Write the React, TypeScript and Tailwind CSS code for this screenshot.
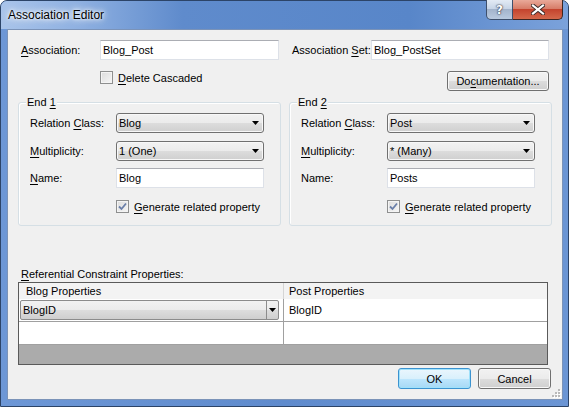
import React from 'react';

const Key: React.FC<{ children: React.ReactNode }> = ({ children }) => (
  <span className="underline underline-offset-[2px] decoration-[1px]">{children}</span>
);

const Arrow: React.FC = () => (
  <svg width="7" height="4" viewBox="0 0 7 4" className="shrink-0">
    <path d="M0 0 H7 L3.5 4 Z" fill="#000" />
  </svg>
);

const TextBox: React.FC<{ value: string; className: string }> = ({ value, className }) => (
  <div
    className={`h-[20px] flex items-center pl-[2px] bg-white border border-[#dde1e8] border-t-[#abadb3] ${className}`}
  >
    {value}
  </div>
);

const Combo: React.FC<{ value: string }> = ({ value }) => (
  <div className="h-[20px] w-[148px] flex items-center pl-[2px] pr-[4px] rounded-[3px] border border-[#707070] bg-[linear-gradient(#f2f2f2,#ebebeb_50%,#dddddd_50%,#cfcfcf)] shadow-[inset_0_0_0_1px_#f8f8f8]">
    <span>{value}</span>
    <span className="ml-auto">
      <Arrow />
    </span>
  </div>
);

const CheckBox: React.FC<{ checked?: boolean; label: React.ReactNode }> = ({ checked, label }) => (
  <div className="flex items-center gap-[5px] h-[13px]">
    <div className="w-[13px] h-[13px] shrink-0 border border-[#8e8f8f] bg-[linear-gradient(135deg,#dcdcdc,#f6f6f6)] shadow-[inset_0_0_0_1px_#f4f4f4] flex items-center justify-center">
      {checked && (
        <svg width="9" height="9" viewBox="0 0 9 9">
          <path d="M1 4.5 L3.5 7 L8 1.5" fill="none" stroke="#6a7fa9" strokeWidth="1.8" />
        </svg>
      )}
    </div>
    <span>{label}</span>
  </div>
);

const Button: React.FC<{ children: React.ReactNode; className: string; primary?: boolean }> = ({
  children,
  className,
  primary,
}) => (
  <div
    className={`h-[20px] flex items-center justify-center rounded-[3px] border ${
      primary
        ? 'border-[#3c93d0] bg-[linear-gradient(#eaf6fd,#d9f0fc_50%,#bee6fd_50%,#a7d9f5)] shadow-[inset_0_0_0_1px_#9fe1fb]'
        : 'border-[#707070] bg-[linear-gradient(#f2f2f2,#ebebeb_50%,#dddddd_50%,#cfcfcf)] shadow-[inset_0_0_0_1px_#f8f8f8]'
    } ${className}`}
  >
    {children}
  </div>
);

const EndGroup: React.FC<{
  n: string;
  relation: string;
  multiplicity: string;
  name: string;
  nameKey?: boolean;
}> = ({ n, relation, multiplicity, name, nameKey }) => (
  <div className="relative w-[263px] h-[124px] rounded-[3px] border border-[#d5dfe5] shadow-[inset_1px_1px_0_#ffffff]">
    <span className="absolute left-[7px] top-[-8px] px-[1px] bg-[#f0f0f0]">
      End <Key>{n}</Key>
    </span>
    <div className="mt-[10px] pl-[11px] flex items-center h-[20px]">
      <span className="w-[86px]">
        Relation <Key>C</Key>lass:
      </span>
      <Combo value={relation} />
    </div>
    <div className="mt-[8px] pl-[11px] flex items-center h-[20px]">
      <span className="w-[86px]">
        <Key>M</Key>ultiplicity:
      </span>
      <Combo value={multiplicity} />
    </div>
    <div className="mt-[7px] pl-[11px] flex items-center h-[20px]">
      <span className="w-[86px]">{nameKey ? <><Key>N</Key>ame:</> : 'Name:'}</span>
      <TextBox value={name} className="w-[148px]" />
    </div>
    <div className="mt-[12px] pl-[97px]">
      <CheckBox
        checked
        label={
          <>
            <Key>G</Key>enerate related property
          </>
        }
      />
    </div>
  </div>
);

const App: React.FC = () => {
  return (
    <div className="relative w-[569px] h-[407px] flex flex-col rounded-t-[7px] border border-[#2c4468] bg-[linear-gradient(90deg,#6d97d6,#5f8bcd_50%,#6b95d4)] font-['Liberation_Sans',Arial,sans-serif] text-[11px] leading-[14px] text-black">
      {/* title bar */}
      <div className="h-[28px] flex items-start rounded-t-[6px] bg-[linear-gradient(90deg,#a9c4ea_0%,#8eb0e1_14%,#5f8bcc_32%,#5886c9_72%,#7ba2db_100%)]">
        <span className="ml-[7px] mt-[7px] text-[12px] [text-shadow:0_0_10px_#ffffff,0_0_6px_#ffffff,0_0_3px_#ffffff]">
          Association Editor
        </span>
      </div>

      {/* caption buttons */}
      <div className="absolute right-[5px] top-[-1px] flex">
        <div className="w-[27px] h-[20px] flex items-center justify-center rounded-bl-[5px] border border-t-0 border-[#3d4f6c] bg-[linear-gradient(#e3ebf5,#c8d5e7_45%,#a3b4cc_50%,#b9cae0)]">
          <span className="font-['DejaVu_Sans',sans-serif] font-bold text-[12px] text-white [text-shadow:0_0_1px_#223,0_0_2px_#223]">?</span>
        </div>
        <div className="w-[50px] h-[20px] flex items-center justify-center rounded-br-[5px] border border-t-0 border-l-0 border-[#3d2520] bg-[linear-gradient(#e9a999,#d77d69_45%,#c4442e_50%,#d4684b)]">
          <svg width="14" height="11" viewBox="0 0 14 11">
            <path d="M2 1.5 L12 9.5 M12 1.5 L2 9.5" stroke="#3b2a28" strokeWidth="4" strokeLinecap="square" />
            <path d="M2 1.5 L12 9.5 M12 1.5 L2 9.5" stroke="#ffffff" strokeWidth="2.2" strokeLinecap="square" />
          </svg>
        </div>
      </div>

      {/* client area */}
      <div className="relative ml-[6px] mr-[5px] mb-[6px] flex-1 flex flex-col border border-[#7b93b8] bg-[#f0f0f0]">
        <div className="mt-[10px] pl-[13px] flex items-center h-[20px]">
          <span className="w-[79px]">
            <Key>A</Key>ssociation:
          </span>
          <TextBox value="Blog_Post" className="w-[179px]" />
          <span className="ml-[13px] w-[79px]">
            Association <Key>S</Key>et:
          </span>
          <TextBox value="Blog_PostSet" className="w-[178px]" />
        </div>

        <div className="mt-[11px] pl-[92px] pr-[13px] flex items-start h-[20px]">
          <CheckBox
            label={
              <>
                <Key>D</Key>elete Cascaded
              </>
            }
          />
          <Button className="ml-auto w-[102px]">
            Do<Key>c</Key>umentation...
          </Button>
        </div>

        <div className="mt-[11px] pl-[10px] flex gap-[8px]">
          <EndGroup n="1" relation="Blog" multiplicity="1 (One)" name="Blog" nameKey />
          <EndGroup n="2" relation="Post" multiplicity="* (Many)" name="Posts" />
        </div>

        <div className="mt-[41px] pl-[13px] h-[14px]">
          <Key>R</Key>eferential Constraint Properties:
        </div>

        {/* grid */}
        <div className="mt-[1px] ml-[10px] w-[530px] h-[83px] flex flex-col border border-[#5a5a5a] bg-[#ababab]">
          <div className="h-[16px] flex items-center bg-[#f3f3f3]">
            <div className="w-[265px] h-full flex items-center pl-[7px] border-r border-[#d5d5d5]">Blog Properties</div>
            <div className="pl-[5px]">Post Properties</div>
          </div>
          <div className="h-[23px] flex bg-white border-b border-[#a0a0a0]">
            <div className="w-[265px] flex items-center pl-[1px] border-r border-[#a0a0a0]">
              <div className="w-[259px] h-[20px] flex items-center rounded-[2px] border border-[#8c8c8c] bg-[linear-gradient(#f2f2f2,#ebebeb_50%,#dddddd_50%,#cfcfcf)]">
                <span className="pl-[2px]">BlogID</span>
                <div className="ml-auto w-[12px] h-full flex items-center justify-center border-l border-[#8c8c8c]">
                  <Arrow />
                </div>
              </div>
            </div>
            <div className="flex items-center pl-[5px]">BlogID</div>
          </div>
          <div className="h-[23px] flex bg-white border-b border-[#a0a0a0]">
            <div className="w-[265px] border-r border-[#a0a0a0]" />
            <div />
          </div>
        </div>

        <div className="mt-[3px] pr-[11px] flex justify-end gap-[7px]">
          <Button primary className="w-[73px] h-[21px]">
            OK
          </Button>
          <Button className="w-[73px] h-[21px]">Cancel</Button>
        </div>

        {/* size grip */}
        <svg className="absolute right-[1px] bottom-[1px]" width="11" height="11" viewBox="0 0 11 11">
          {[
            [8, 2],
            [8, 5],
            [5, 5],
            [8, 8],
            [5, 8],
            [2, 8],
          ].map(([x, y]) => (
            <g key={`${x}-${y}`}>
              <rect x={x + 1} y={y + 1} width="2" height="2" fill="#ffffff" />
              <rect x={x} y={y} width="2" height="2" fill="#b9b9b9" />
            </g>
          ))}
        </svg>
      </div>
    </div>
  );
};

export default App;
